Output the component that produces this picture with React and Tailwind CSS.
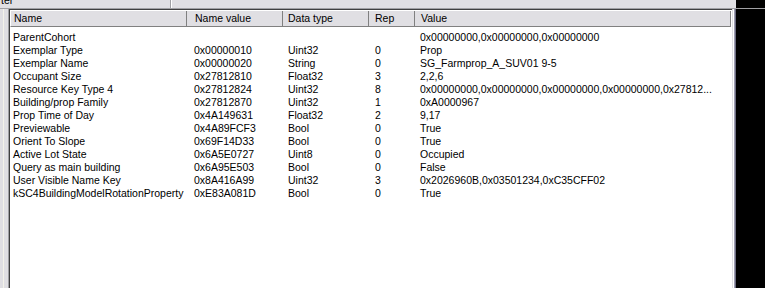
const rows = [
  ["ParentCohort", "", "", "", "0x00000000,0x00000000,0x00000000"],
  ["Exemplar Type", "0x00000010", "Uint32", "0", "Prop"],
  ["Exemplar Name", "0x00000020", "String", "0", "SG_Farmprop_A_SUV01 9-5"],
  ["Occupant Size", "0x27812810", "Float32", "3", "2,2,6"],
  ["Resource Key Type 4", "0x27812824", "Uint32", "8", "0x00000000,0x00000000,0x00000000,0x00000000,0x27812..."],
  ["Building/prop Family", "0x27812870", "Uint32", "1", "0xA0000967"],
  ["Prop Time of Day", "0x4A149631", "Float32", "2", "9,17"],
  ["Previewable", "0x4A89FCF3", "Bool", "0", "True"],
  ["Orient To Slope", "0x69F14D33", "Bool", "0", "True"],
  ["Active Lot State", "0x6A5E0727", "Uint8", "0", "Occupied"],
  ["Query as main building", "0x6A95E503", "Bool", "0", "False"],
  ["User Visible Name Key", "0x8A416A99", "Uint32", "3", "0x2026960B,0x03501234,0xC35CFF02"],
  ["kSC4BuildingModelRotationProperty", "0xE83A081D", "Bool", "0", "True"],
];

const headers = ["Name", "Name value", "Data type", "Rep", "Value"];
const pads = ["pl-[3px]", "pl-[8px]", "pl-[5px]", "pl-[6px]", "pl-[6px]"];
const dataPads = ["pl-[3px]", "pl-[8px]", "pl-[6px]", "pl-[7px]", "pl-[6px]"];

const App = () => {
  return (
    <div
      className="w-[765px] h-[288px] overflow-hidden flex flex-col bg-[#e0dfe3] text-black text-[10.5px] leading-[13px]"
      style={{ fontFamily: '"Liberation Sans", Arial, sans-serif' }}
    >
      {/* top strip */}
      <div className="h-[9px] flex shrink-0 border-b border-[#a0a0a4]">
        <div className="w-[170px] overflow-hidden">
          <div className="-mt-[6px] pl-[1px]">ter</div>
        </div>
        <div className="w-[1px] bg-[#a0a0a4]" />
        <div className="w-[1px] bg-white" />
        <div className="flex-1" />
        <div className="w-[29px] bg-black" />
      </div>

      <div className="flex-1 flex min-h-0">
        {/* left gutter */}
        <div className="w-[9px] flex shrink-0">
          <div className="w-[3px]" />
          <div className="w-[1px] bg-[#f4f3ea]" />
          <div className="w-[4px]" />
          <div className="w-[1px] bg-[#a0a0a4]" />
        </div>

        {/* list box */}
        <div className="flex-1 flex flex-col bg-white border-l border-t border-[#404040] min-w-0">
          <div className="grid grid-cols-[176px_96px_86px_46px_1fr] h-[17px] shrink-0 bg-[#e0dfe3] border-t border-l border-white border-b border-b-[#808080] mr-[1px]">
            {headers.map((h, i) => (
              <div
                key={h}
                className={`${pads[i]} flex items-center border-r border-r-[#808080] whitespace-nowrap overflow-hidden`}
              >
                {h}
              </div>
            ))}
          </div>
          <div className="pt-[4px] flex flex-col">
            {rows.map((r, idx) => (
              <div key={idx} className="grid grid-cols-[176px_96px_86px_46px_1fr] h-[13px]">
                {r.map((c, i) => (
                  <div key={i} className={`${dataPads[i]} whitespace-nowrap overflow-hidden`}>
                    {c}
                  </div>
                ))}
              </div>
            ))}
          </div>
        </div>

        {/* right edge */}
        <div className="w-[1px] bg-[#e0dfe3]" />
        <div className="w-[1px] bg-white" />
        <div className="w-[1px] bg-[#9d9db0]" />
        <div className="w-[1px] bg-[#6b6b80]" />
        <div className="w-[29px] bg-black" />
      </div>
    </div>
  );
};

export default App;
